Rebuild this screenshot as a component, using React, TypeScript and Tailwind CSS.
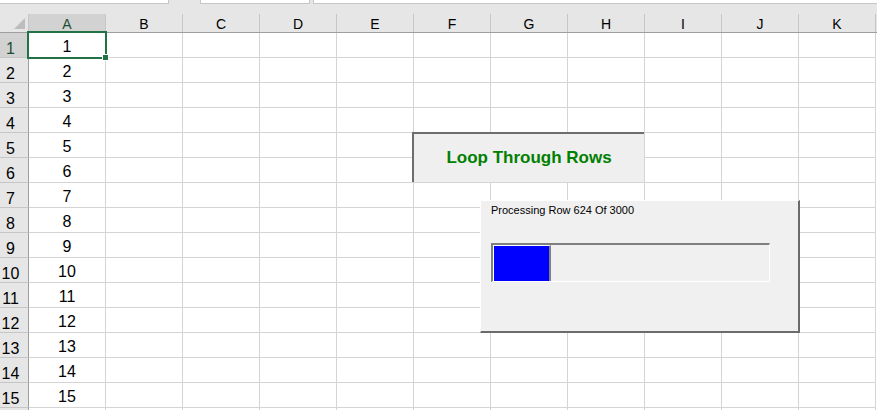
import React from 'react';

const columns = ['A', 'B', 'C', 'D', 'E', 'F', 'G', 'H', 'I', 'J', 'K'];
const rows = Array.from({ length: 16 }, (_, i) => i + 1);

export default function App() {
  return (
    <div className="relative w-[877px] h-[410px] overflow-hidden bg-white font-['Liberation_Sans',Arial,sans-serif] text-black">
      {/* formula bar strip */}
      <div className="flex items-start h-[14px] bg-[#e6e6e6]">
        <div className="w-[169px] h-[4px] bg-white border-b border-r border-[#c6c6c6]" />
        <div className="ml-[31px] w-[110px] h-[4px] bg-white border-b border-x border-[#c6c6c6]" />
        <div className="ml-[3px] flex-1 h-[4px] bg-white border-b border-l border-[#c6c6c6]" />
      </div>

      {/* column headers */}
      <div className="flex h-[19px] bg-[#e6e6e6] border-b border-[#9e9e9e]">
        <div className="relative w-[29px] shrink-0 border-r border-[#c6c6c6]">
          <svg className="absolute left-[14px] top-[4px]" width="11" height="11" viewBox="0 0 11 11">
            <polygon points="11,0 11,11 0,11" fill="#bdbdbd" />
          </svg>
        </div>
        {columns.map((c) => (
          <div
            key={c}
            className={`w-[77px] shrink-0 flex items-end justify-center pb-[1px] text-[14px] leading-[14px] border-r border-[#c6c6c6] ${
              c === 'A' ? 'bg-[#d2d2d2] text-[#1d4d33]' : ''
            }`}
          >
            {c}
          </div>
        ))}
      </div>

      {/* rows */}
      {rows.map((r) => (
        <div key={r} className="flex h-[25px]">
          <div
            className={`w-[29px] shrink-0 flex items-end justify-center pr-[7px] text-[16px] leading-[16px] border-r border-b border-r-[#9e9e9e] border-b-[#c6c6c6] ${
              r === 1 ? 'bg-[#d2d2d2] text-[#1d4d33]' : 'bg-[#e6e6e6]'
            }`}
          >
            {r <= 15 ? r : ''}
          </div>
          {columns.map((c) => (
            <div
              key={c}
              className="w-[77px] shrink-0 flex items-end justify-center pb-[2px] text-[16px] leading-[16px] border-r border-b border-[#d4d4d4]"
            >
              {c === 'A' && r <= 15 ? r : ''}
            </div>
          ))}
        </div>
      ))}

      {/* active cell A1 */}
      <div className="absolute left-[27px] top-[31px] w-[80px] h-[28px] border-2 border-[#217346]" />
      <div className="absolute left-[103px] top-[55px] w-[5px] h-[5px] bg-[#217346] outline outline-1 outline-white" />

      {/* macro button */}
      <div className="absolute left-[412px] top-[132px] w-[232px] h-[50px] flex items-center justify-center bg-[#efefef] border-t-2 border-l-2 border-[#6d6d6d]">
        <span className="text-[17px] font-bold text-[#008000]">Loop Through Rows</span>
      </div>

      {/* progress userform */}
      <div className="absolute left-[480px] top-[200px] w-[320px] h-[133px] bg-[#f0f0f0] border-t border-l border-white border-r-2 border-b-2 border-r-[#6b6b6b] border-b-[#6b6b6b]">
        <div className="pl-[10px] pt-[3px] text-[11px] leading-[13px]">Processing Row 624 Of 3000</div>
        <div className="ml-[10px] mt-[26px] w-[279px] h-[39px] flex border-t-2 border-l-2 border-[#808080] border-r border-b border-r-white border-b-white">
          <div className="w-[58px] h-full bg-[#0000ff] border-t border-l border-white border-r-2 border-r-[#808080]" />
        </div>
      </div>
    </div>
  );
}
